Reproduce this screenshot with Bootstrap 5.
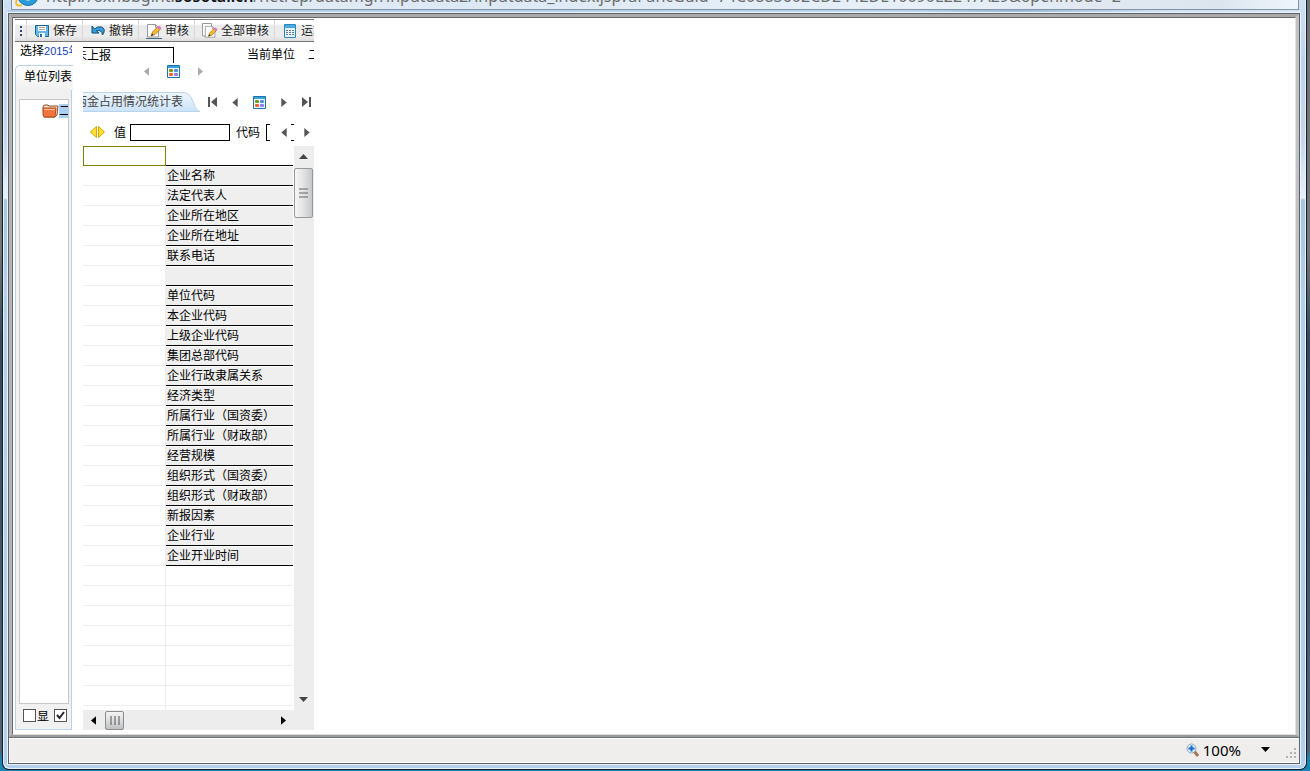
<!DOCTYPE html>
<html lang="zh-CN">
<head>
<meta charset="utf-8">
<meta name="viewport" content="width=device-width, initial-scale=1">
<title>数据录入</title>
<link href="https://cdn.jsdelivr.net/npm/bootstrap@5.3.0/dist/css/bootstrap.min.css" rel="stylesheet">
<style>
  body { height: 100vh; padding: 0 3px 1px 2px; overflow: hidden; color: #000; font: 12px/16px "Liberation Sans", "Noto Sans CJK SC", sans-serif;
    background: linear-gradient(#6f7173 0, #747678 250px, #38485a 340px, #526375 750px, #1b84b5 760px); }
  button, input { font: inherit; color: inherit; border-radius: 0; }
  button { padding: 0; border: 0; background: none; display: flex; align-items: center; justify-content: center; }
  svg { display: block; flex: none; }
  .fill { flex: 1 1 0; min-height: 0; }
  .win { border: 1px solid #111c2b; border-top: 0; border-radius: 0 0 7px 7px; padding: 0 6px 5px 5px; box-shadow: inset 1px -1px #e8f4fc, inset -1px 0 #e8f4fc;
    background: linear-gradient(#cfe1f4 0, #bcd2ec 60px, #c4d7ee 140px, #e9f1f9 198px, #a9c4e0 200px, #b2cfeb 300px, #b2cfec 100%); }
  .address { height: 10px; margin: 0 1px 0 3px; border: 1px solid #8494a6; border-top: 0; background: linear-gradient(90deg, #e8eff7, #dce8f4 35%, #e7f0f9 70%, #dce5ee 94%, #eff5fc); }
  .address a { font: 16px/20px "Noto Sans", sans-serif; color: #6c6c6c; white-space: nowrap; top: -14px; left: 34px; }
  .address b { color: #111; font-weight: 600; }
  .address svg { top: -18px; left: 2px; }
  .chrome-gap { height: 3px; background: linear-gradient(90deg, #b4cfec, #bcd5ed 70%, #9ab8d9 78%, #d4e4f5 90%); }
  .pane { border: 1px solid #59626e; box-shadow: 0 0 0 1px #edf5fc; background: #f0eded; }
  .view { border: solid; border-width: 3px 3px 2px; border-color: #aaa #c2c2c2 #999 #b5b5b5; background: #fff; }
  .view-in { border: 1px solid #64676b; border-right-color: #e1e1e1; border-bottom-color: #ddd; padding: 1px 0 4px 2px; }
  .app { width: 299px; }
  .tools { height: 23px; border-top: 1px solid #777; border-bottom: 1px solid #777; background: linear-gradient(#fff 0, #fff 18%, #eaeaea 28%, #ededed 75%, #dcdcdc 100%); }
  .tools button { border-left: 1px solid #d9d9d9; padding: 1px 5px 0 7px; gap: 3px; white-space: nowrap; color: #222; }
  .grip { width: 11px; padding-left: 5px; }
  .side { width: 58px; }
  .period { width: 57px; height: 23px; padding: 1px 0 0 5px; white-space: nowrap; }
  .period a { font-size: 11px; color: #1241c4; }
  .side-box { width: 57px; border: 1px solid #b8d2ea; border-width: 0 1px 1px; background: #f1f1f1; }
  .side-tab { height: 25px; border: 1px solid #b8d2ea; border-width: 1px 0 0 1px; border-radius: 5px 0 0 0; background: linear-gradient(#fff, #f1f1f1); white-space: nowrap; padding: 3px 0 0 8px; }
  .tree { width: 50px; margin: 9px 0 0 3px; border: 1px solid #c8c8c8; background: #fff; }
  .tree > div { padding: 3px 0 0 22px; white-space: nowrap; }
  .tree .sel { width: 12px; height: 14px; background: #a9cff4; line-height: 14px; }
  .checks { height: 25px; padding: 0 0 3px 7px; gap: 1px; }
  .checks input { appearance: none; width: 13px; height: 13px; margin: 0; border: 1px solid #555; background: #fff; }
  .checks input:checked { background: #fff url("data:image/svg+xml,%3Csvg xmlns='http://www.w3.org/2000/svg' viewBox='0 0 11 11'%3E%3Cpath d='M2 5l2.500 3L9 2' fill='none' stroke='%23223' stroke-width='2'/%3E%3C/svg%3E"); }
  .main-col { width: 231px; margin-left: 10px; }
  .state { width: 91px; height: 16px; border: solid #000; border-width: 1px 1px 0 0; text-indent: -8px; padding: 0; background: #fff; }
  .unit-label { margin-left: 73px; }
  .unit { width: 60px; margin-left: 13px; }
  .pick { height: 16px; padding-left: 61px; gap: 18px; color: #aaa; }
  .pager { height: 20px; margin-top: 13px; gap: 15px; color: #555; }
  .sheet { height: 20px; width: 117px; margin-right: -7px; }
  .sheet span { top: 0; right: 17px; white-space: nowrap; color: #444; line-height: 20px; }
  .values { height: 17px; margin: 12px 0 5px; padding-left: 7px; }
  .box { height: 17px; border: 1px solid #000; padding: 0 3px; }
  .code-wrap { width: 28px; }
  .code-wrap button { left: 4px; width: 21px; padding-left: 6px; color: #555; }
  .grid-area table { border-collapse: separate; border-spacing: 0; table-layout: fixed; width: 210px; line-height: 16px; }
  .grid-area td, .grid-area th { height: 20px; padding: 0 0 1px 1px; font-weight: 400; border-bottom: 1px solid #eee; white-space: nowrap; }
  .grid-area tr > :first-child { width: 83px; border-right: 1px solid #eee; }
  .grid-area .item > th, .grid-area .head > th { border-bottom-color: #000; }
  .grid-area .item > th { background: #efefef; border-top: 1px solid #fff; }
  .grid-area tr > .active-cell { border: 1px solid #808000; }
  .vbar { width: 20px; background: #ededed; }
  .vbar button { width: 19px; height: 21px; }
  .vbar .thumb { width: 19px; height: 50px; margin-top: 1px; border: 1px solid #979797; border-radius: 2px; background: linear-gradient(90deg, #f7f7f7, #e5e5e5 45%, #c7c8ca); }
  .hbar { height: 20px; background: #ededed; }
  .hbar button { width: 20px; height: 19px; }
  .hbar .thumb { width: 19px; height: 19px; border: 1px solid #8d8d8d; border-radius: 2px; background: linear-gradient(#f3f3f3, #e0e0e0 45%, #bfc0c2); margin-left: 2px; }
  .hbar .end { margin: 0 21px 0 auto; }
  .status { height: 26px; border-top: 1px solid #6f757b; box-shadow: inset 0 1px #fff, inset 1px -1px #fff; font: 15px/20px "Noto Sans", sans-serif; padding: 0 2px 2px 0; }
  .zoom-level { margin: 0 20px 0 4px; }
  .resize { margin: 0 0 2px 15px; }
</style>
</head>
<body>
<svg width="0" height="0" class="position-absolute" aria-hidden="true">
  <defs>
    <symbol id="left" viewBox="0 0 6 10"><path d="M6 0v10L0 5z" fill="currentColor"/></symbol>
    <symbol id="right" viewBox="0 0 6 10"><path d="M0 0v10l6-5z" fill="currentColor"/></symbol>
    <symbol id="cards" viewBox="0 0 13 13"><path d="M.5.5h12v12H.5z" fill="#f4fbff" stroke="#1974aa"/><path d="M1 1h11v2H1z" fill="#3ba0e0"/><rect x="2" y="4" width="4" height="3" rx="1" fill="#7a9a16"/><rect x="7" y="4" width="4" height="3" rx="1" fill="#4a93df"/><rect x="2" y="8" width="4" height="3" rx="1" fill="#f2642e"/><rect x="7" y="8" width="4" height="3" rx="1" fill="#987bf0"/></symbol>
    <symbol id="edit" viewBox="0 0 16 16"><path d="M1.500 1.500h8l3 3v9.500h-11z" fill="#fff" stroke="#999"/><path d="M9.500 1.500v3h3" fill="none" stroke="#999"/><path d="M5 13l1.500-4 5-5 2.500 2.500-5 5z" fill="#f9bd28" stroke="#936012" stroke-width=".7"/><path d="M11 4.500l2-2 2.500 2.500-2 2z" fill="#df75c0"/><path d="M5 13l1-2.500L7.500 12z" fill="#333"/></symbol>
  </defs>
</svg>
<div class="win d-flex flex-column h-100">
  <div class="address position-relative overflow-hidden">
    <svg class="position-absolute" width="26" height="26" viewBox="0 0 26 26"><circle cx="14" cy="13" r="8" fill="#e8f8ff" stroke="#2b9bd5" stroke-width="5"/><circle cx="14" cy="13" r="10.500" fill="none" stroke="#1676ad"/><path d="M4 14q-5 12 4 9" fill="none" stroke="#f2bd32" stroke-width="2"/></svg>
    <a class="position-absolute text-decoration-none" href="#">http://oxhbbgint.<b>sosotal.cn</b>/netrep/datamgr/inputdata2/inputdata_index.jsp?aFuncGuid=74C0883602CD2442DE10090E2247A29&amp;openmode=2</a>
  </div>
  <div class="chrome-gap"></div>
  <div class="pane fill d-flex flex-column">
    <div class="view fill d-flex flex-column">
      <div class="view-in fill d-flex">
        <main class="app d-flex flex-column">
          <div class="tools d-flex overflow-hidden flex-shrink-0">
            <span class="grip d-flex align-items-center flex-shrink-0"><svg width="2" height="10"><path d="M0 0h2v2H0zM0 4h2v2H0zM0 8h2v2H0z" fill="#2b4a80"/></svg></span>
            <button type="button"><svg width="16" height="16" viewBox="0 0 16 16"><path d="M1.500 2.500h13v11h-11l-2-2z" fill="#65b6e8" stroke="#17679d"/><path d="M4 3h8v5H4zM5 10h6v4H5z" fill="#fff"/><path d="M5 4.500h6M5 6.500h6" stroke="#a7a7a7"/><path d="M6 11h2v3H6z" fill="#276b9c"/></svg>保存</button>
            <button type="button"><svg width="16" height="16" viewBox="0 0 16 16"><path d="M2 3v7h7L6.500 8q5-2 6 4 4-6-1-8-4-1-7 2z" fill="#3b9fda" stroke="#0b4d7e"/></svg>撤销</button>
            <button type="button"><svg width="16" height="16"><use href="#edit"/><path d="M0 15.500h16" stroke="#456b8b"/></svg>审核</button>
            <button type="button"><svg width="16" height="16" viewBox="0 0 16 16"><path d="M.5.500h9V13h-9z" fill="#fff" stroke="#999"/><use href="#edit" x="2" y="2" width="14" height="14"/></svg>全部审核</button>
            <button type="button"><svg width="16" height="16" viewBox="0 0 16 16"><path d="M2.500 1.500h11v13h-11z" fill="#e6f4fc" stroke="#2987bd"/><path d="M3 2h10v3H3z" fill="#4ea9df"/><path d="M4 7.500h8M4 9.500h8M4 11.500h8" stroke="#657989" stroke-dasharray="2 1"/></svg>运算</button>
          </div>
          <div class="fill d-flex">
            <aside class="side d-flex flex-column overflow-hidden">
              <div class="period d-flex overflow-hidden flex-shrink-0"><span>选择</span><a href="#" class="text-decoration-none">2015年</a></div>
              <div class="side-tab flex-shrink-0 overflow-hidden">单位列表</div>
              <div class="side-box d-flex flex-column flex-grow-1">
                <div class="tree flex-grow-1 overflow-hidden">
                  <div class="d-flex align-items-center"><svg width="17" height="15" viewBox="0 0 17 15"><path d="M1 4q0-2 2-2h3l1 1h9l-1 9-2 2H2z" fill="#f6dfc3" stroke="#884c2d"/><path d="M1 5h13l-1 9H3q-1 0-2-2z" fill="#ef773f" stroke="#b54b1f"/><path d="M2 6.500h11" stroke="#ffc29c"/></svg><span class="sel">二</span></div>
                </div>
                <div class="checks d-flex align-items-center flex-shrink-0">
                  <input type="checkbox" id="show"><label for="show" class="mt-1">显</label>
                  <input type="checkbox" id="all" checked class="ms-1" aria-label="包含下级">
                </div>
              </div>
            </aside>
            <section class="main-col d-flex flex-column overflow-hidden">
              <div class="d-flex flex-shrink-0 text-nowrap overflow-hidden" style="padding-top:5px">
                <input class="state" value="未上报" aria-label="状态" readonly>
                <label for="unit" class="unit-label">当前单位</label><input id="unit" class="unit border-0 p-0" value="二级单位">
              </div>
              <div class="pick d-flex align-items-center flex-shrink-0">
                <button type="button" aria-label="上一个" disabled><svg width="5" height="9"><use href="#left"/></svg></button>
                <button type="button" aria-label="选择单位"><svg width="13" height="13"><use href="#cards"/></svg></button>
                <button type="button" aria-label="下一个" disabled><svg width="5" height="9"><use href="#right"/></svg></button>
              </div>
              <div class="pager d-flex align-items-center flex-shrink-0">
                <div class="sheet position-relative overflow-hidden"><svg width="117" height="20"><defs><linearGradient id="tabfill" x2="0" y2="1"><stop stop-color="#eef6fd"/><stop offset="1" stop-color="#cce3f9"/></linearGradient></defs><path d="M-2 .5h102q7 0 10 9t7 10H-2z" fill="url(#tabfill)" stroke="#b8d4ed"/></svg><span class="position-absolute">两金占用情况统计表</span></div>
                <button type="button" aria-label="首页"><svg width="9" height="10"><path d="M0 0h2v10H0z" fill="currentColor"/><use href="#left" x="3" width="6" height="10"/></svg></button>
                <button type="button" aria-label="上一页"><svg width="6" height="9"><use href="#left"/></svg></button>
                <button type="button" aria-label="目录"><svg width="13" height="13"><use href="#cards"/></svg></button>
                <button type="button" aria-label="下一页"><svg width="6" height="9"><use href="#right"/></svg></button>
                <button type="button" aria-label="末页"><svg width="9" height="10"><path d="M7 0h2v10H7z" fill="currentColor"/><use href="#right" width="6" height="10"/></svg></button>
              </div>
              <div class="values d-flex align-items-center flex-shrink-0">
                <svg width="15" height="13" viewBox="0 0 15 13"><path d="M6.500.5v11L.5 6zM8.500.5v11l6-5.500z" fill="#ffe12c" stroke="#d5a200"/></svg>
                <label for="val" style="margin:0 4px 0 9px">值</label><input id="val" class="box" style="width:100px">
                <label for="code" style="margin:0 6px">代码</label>
                <div class="code-wrap position-relative overflow-hidden"><input id="code" class="box d-block" style="width:60px"><button type="button" class="position-absolute top-0 bg-white h-100" aria-label="前移"><svg width="6" height="9"><use href="#left"/></svg></button></div>
                <button type="button" style="margin-left:10px;color:#555" aria-label="后移"><svg width="6" height="9"><use href="#right"/></svg></button>
              </div>
              <div class="grid-area fill d-flex">
                <div class="overflow-hidden flex-grow-1"><table><tbody id="rows"></tbody></table></div>
                <div class="vbar d-flex flex-column">
                  <button type="button" aria-label="向上滚动"><svg width="9" height="5"><path d="M0 5h9L4.500 0z" fill="#444"/></svg></button>
                  <div class="thumb d-flex align-items-center justify-content-center"><svg width="9" height="10"><path d="M0 1h9M0 5h9M0 9h9" stroke="#666"/></svg></div>
                  <button type="button" aria-label="向下滚动" class="mt-auto"><svg width="9" height="5"><path d="M0 0h9L4.500 5z" fill="#444"/></svg></button>
                </div>
              </div>
              <div class="hbar d-flex align-items-center flex-shrink-0">
                <button type="button" aria-label="向左滚动"><svg width="5" height="9"><use href="#left"/></svg></button>
                <div class="thumb d-flex align-items-center justify-content-center"><svg width="10" height="9"><path d="M1 0v9M5 0v9M9 0v9" stroke="#555"/></svg></div>
                <button type="button" aria-label="向右滚动" class="end"><svg width="5" height="9"><use href="#right"/></svg></button>
              </div>
            </section>
          </div>
        </main>
      </div>
    </div>
    <footer class="status d-flex align-items-center justify-content-end flex-shrink-0">
      <svg width="13" height="14" viewBox="0 0 13 14"><path d="M8 8l4 5" stroke="#a87855" stroke-width="3"/><circle cx="5.500" cy="5.500" r="4.500" fill="#dff1ff" stroke="#8aa6c5"/><path d="M5.500 2.500v6M2.500 5.500h6" stroke="#1768c8" stroke-width="2"/></svg>
      <span class="zoom-level">100%</span>
      <button type="button" aria-label="缩放级别"><svg width="9" height="5"><path d="M0 0h9L4.500 5z"/></svg></button>
      <svg class="resize align-self-end" width="12" height="11"><path d="M9 0h2v2H9zM5 4h2v2H5zM9 4h2v2H9zM1 8h2v2H1zM5 8h2v2H5zM9 8h2v2H9z" fill="#b5b1b1"/></svg>
    </footer>
  </div>
</div>
<script>
  const names = ['企业名称','法定代表人','企业所在地区','企业所在地址','联系电话','','单位代码','本企业代码','上级企业代码','集团总部代码','企业行政隶属关系','经济类型','所属行业（国资委）','所属行业（财政部）','经营规模','组织形式（国资委）','组织形式（财政部）','新报因素','企业行业','企业开业时间'];
  const head = '<tr class="head"><td class="active-cell"></td><th></th></tr>';
  const items = names.map(n => `<tr class="item"><td></td><th scope="row">${n}</th></tr>`).join('');
  document.getElementById('rows').innerHTML = head + items + '<tr><td></td><td></td></tr>'.repeat(8);
</script>
<script src="https://cdn.jsdelivr.net/npm/bootstrap@5.3.0/dist/js/bootstrap.bundle.min.js"></script>
</body>
</html>
